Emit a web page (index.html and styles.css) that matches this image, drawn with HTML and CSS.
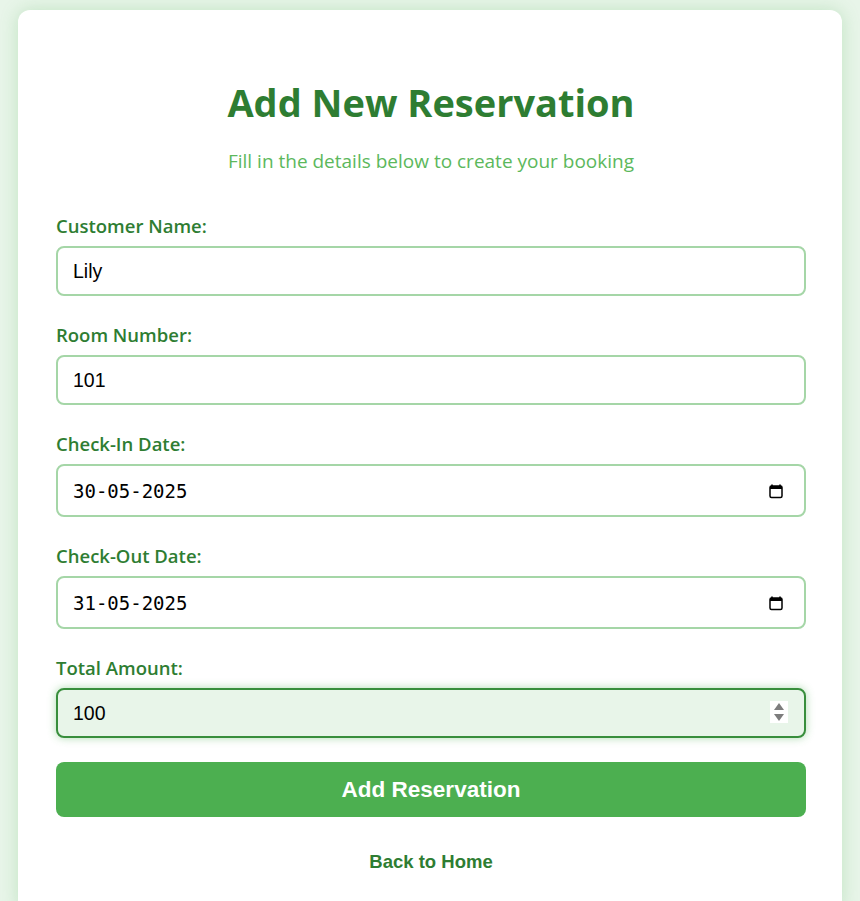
FILE: index.html
```html
<!DOCTYPE html>
<html lang="en">
<head>
<meta charset="utf-8">
<title>Add New Reservation</title>
<link rel="stylesheet" href="styles.css">
</head>
<body>
<div class="card">
  <h1 class="title">Add New Reservation</h1>
  <p class="subtitle">Fill in the details below to create your booking</p>
  <form class="form">
    <div class="field">
      <label class="label" for="name">Customer Name:</label>
      <input class="input" id="name" type="text" value="Lily">
    </div>
    <div class="field">
      <label class="label" for="room">Room Number:</label>
      <input class="input" id="room" type="text" value="101">
    </div>
    <div class="field">
      <label class="label" for="in">Check-In Date:</label>
      <div class="input-wrap">
        <input class="input input-date" id="in" type="text" value="30-05-2025">
        <svg class="cal" viewBox="0 0 16 16" width="16" height="16" aria-hidden="true"><path d="M4 1.5v2M12 1.5v2" stroke="#000" stroke-width="1.6" fill="none"/><rect x="2" y="3" width="12" height="11.5" rx="1.5" stroke="#000" stroke-width="1.5" fill="none"/><rect x="2" y="3" width="12" height="3" fill="#000"/></svg>
      </div>
    </div>
    <div class="field">
      <label class="label" for="out">Check-Out Date:</label>
      <div class="input-wrap">
        <input class="input input-date" id="out" type="text" value="31-05-2025">
        <svg class="cal" viewBox="0 0 16 16" width="16" height="16" aria-hidden="true"><path d="M4 1.5v2M12 1.5v2" stroke="#000" stroke-width="1.6" fill="none"/><rect x="2" y="3" width="12" height="11.5" rx="1.5" stroke="#000" stroke-width="1.5" fill="none"/><rect x="2" y="3" width="12" height="3" fill="#000"/></svg>
      </div>
    </div>
    <div class="field field-last">
      <label class="label" for="amt">Total Amount:</label>
      <div class="input-wrap">
        <input class="input input-focus" id="amt" type="text" value="100">
        <span class="spin" aria-hidden="true"><svg viewBox="0 0 18 22" width="18" height="22"><rect width="18" height="22" fill="#fff"/><path d="M9 2 L14 9 H4 Z" fill="#7d7d7d"/><path d="M9 20 L14 13 H4 Z" fill="#7d7d7d"/></svg></span>
      </div>
    </div>
    <button class="btn" type="button">Add Reservation</button>
  </form>
  <a class="back" href="#">Back to Home</a>
</div>
</body>
</html>
```
FILE: styles.css
```css
html, body {
  margin: 0;
  padding: 0;
}
body {
  background: #e8f5e9;
  padding: 10px 18px 0;
  font-family: "Open Sans", "Noto Sans", sans-serif;
  height: 901px;
  box-sizing: border-box;
  overflow: hidden;
}
.card {
  background: #fff;
  border-radius: 12px;
  box-shadow: 0 0 18px rgba(76, 175, 80, 0.25);
  padding: 68px 36px 40px 38px;
  min-height: 900px;
  box-sizing: border-box;
}
.title {
  margin: 0;
  text-align: center;
  color: #2e7d32;
  font-size: 38px;
  line-height: 48px;
  font-weight: 700;
}
.subtitle {
  margin: 22px 0 0;
  text-align: center;
  color: #5cb85c;
  font-size: 19px;
  line-height: 26px;
}
.form {
  margin-top: 40px;
  display: flex;
  flex-direction: column;
}
.field {
  display: flex;
  flex-direction: column;
  margin-bottom: 27px;
}
.field-last {
  margin-bottom: 24px;
}
.label {
  color: #2e7d32;
  font-weight: 600;
  font-size: 18.5px;
  line-height: 24px;
  margin-bottom: 8px;
}
.input-wrap {
  position: relative;
}
.input {
  width: 100%;
  box-sizing: border-box;
  height: 50px;
  border: 2px solid #a5d6a7;
  border-radius: 8px;
  padding: 0 15px;
  font-family: "Liberation Sans", Arial, sans-serif;
  font-size: 19.5px;
  color: #000;
  background: #fff;
  outline: none;
}
.input-date {
  height: 53px;
  font-family: "DejaVu Sans Mono", "Liberation Mono", monospace;
  font-size: 19px;
}
.input-focus {
  background: #e8f5e9;
  border-color: #388e3c;
  box-shadow: 0 0 8px rgba(76, 175, 80, 0.45);
}
.cal {
  position: absolute;
  right: 22px;
  top: 50%;
  transform: translateY(-50%);
}
.spin {
  position: absolute;
  right: 18px;
  top: 13px;
  display: block;
  line-height: 0;
}
.btn {
  height: 55px;
  width: 100%;
  border: none;
  border-radius: 8px;
  background: #4caf50;
  color: #fff;
  font-family: "Liberation Sans", Arial, sans-serif;
  font-weight: 700;
  font-size: 22.5px;
  cursor: pointer;
}
.back {
  display: block;
  text-align: center;
  margin-top: 34px;
  color: #2e7d32;
  font-family: "Liberation Sans", Arial, sans-serif;
  font-weight: 700;
  font-size: 18.5px;
  line-height: 21px;
  text-decoration: none;
}
```
